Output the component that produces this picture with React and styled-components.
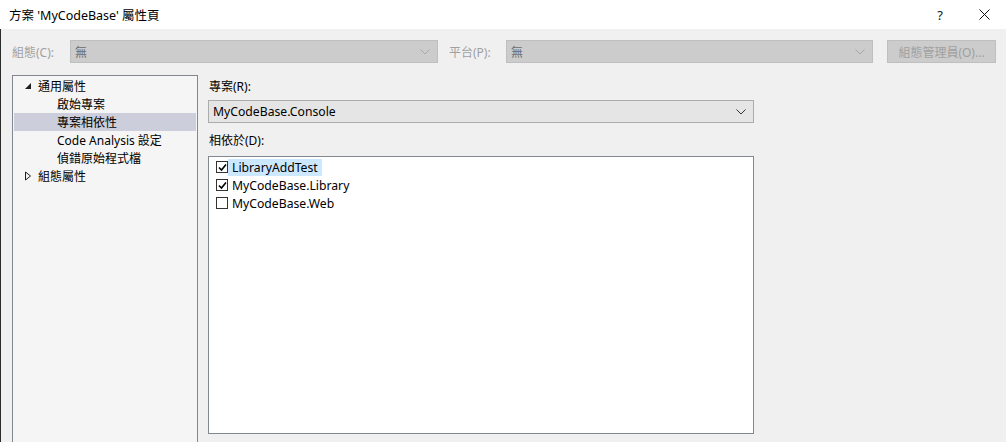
import styled, {createGlobalStyle} from 'styled-components';

const GlobalStyle = createGlobalStyle`
  html, body {
    margin: 0;
    padding: 0;
    background: #f0f0f0;
  }
  body {
    font-family: "Noto Sans", "Noto Sans CJK TC", sans-serif;
    font-size: 12px;
    color: #000;
  }
`;

const treeItems = [
  {label: '通用屬性', level: 0, toggle: 'open'},
  {label: '啟始專案', level: 1},
  {label: '專案相依性', level: 1, selected: true},
  {label: 'Code Analysis 設定', level: 1},
  {label: '偵錯原始程式檔', level: 1},
  {label: '組態屬性', level: 0, toggle: 'closed'},
];

const dependencies = [
  {name: 'LibraryAddTest', checked: true, focused: true},
  {name: 'MyCodeBase.Library', checked: true},
  {name: 'MyCodeBase.Web', checked: false},
];

const Chevron = ({color}) => (
  <svg width="10" height="6" viewBox="0 0 10 6">
    <path d="M0.5 0.5 L5 5 L9.5 0.5" fill="none" stroke={color} strokeWidth="1" />
  </svg>
);

const CheckMark = () => (
  <svg width="9" height="9" viewBox="0 0 9 9">
    <path d="M1 4.5 L3.5 7 L8 1.5" fill="none" stroke="#000" strokeWidth="1.6" />
  </svg>
);

const ToggleIcon = ({state}) =>
  state === 'open' ? (
    <svg width="8" height="8" viewBox="0 0 8 8">
      <path d="M7 1 L7 7 L1 7 Z" fill="#1e1e1e" />
    </svg>
  ) : (
    <svg width="8" height="10" viewBox="0 0 8 10">
      <path d="M1.5 1 L6.5 5 L1.5 9 Z" fill="none" stroke="#1e1e1e" strokeWidth="1" />
    </svg>
  );

export default function App() {
  return (
    <>
      <GlobalStyle />
      <Window>
        <TitleBar>
          <Title>方案 'MyCodeBase' 屬性頁</Title>
          <TitleButtons>
            <HelpButton>?</HelpButton>
            <CloseButton>
              <svg width="11" height="11" viewBox="0 0 11 11">
                <path d="M0.5 0.5 L10.5 10.5 M10.5 0.5 L0.5 10.5" stroke="#111" strokeWidth="1" />
              </svg>
            </CloseButton>
          </TitleButtons>
        </TitleBar>

        <Body>
          <Toolbar>
            <ToolLabel width={58}>組態(C):</ToolLabel>
            <Combo width={368} disabled>
              <span>無</span>
              <Chevron color="#a8a8a8" />
            </Combo>
            <ToolLabel width={57} style={{marginLeft: 11}}>平台(P):</ToolLabel>
            <Combo width={367} disabled>
              <span>無</span>
              <Chevron color="#a8a8a8" />
            </Combo>
            <ManagerButton>組態管理員(O)...</ManagerButton>
          </Toolbar>

          <Content>
            <Tree>
              {treeItems.map(item => (
                <TreeRow key={item.label} selected={item.selected} level={item.level}>
                  <TreeToggle>{item.toggle && <ToggleIcon state={item.toggle} />}</TreeToggle>
                  {item.label}
                </TreeRow>
              ))}
            </Tree>

            <Pane>
              <FieldLabel>專案(R):</FieldLabel>
              <Combo width={546}>
                <ComboText>MyCodeBase.Console</ComboText>
                <Chevron color="#333" />
              </Combo>
              <FieldLabel style={{marginTop: 10}}>相依於(D):</FieldLabel>
              <DependencyList>
                {dependencies.map(dep => (
                  <DependencyRow key={dep.name}>
                    <CheckBox>{dep.checked && <CheckMark />}</CheckBox>
                    <DependencyName focused={dep.focused}>{dep.name}</DependencyName>
                  </DependencyRow>
                ))}
              </DependencyList>
            </Pane>
          </Content>
        </Body>
      </Window>
    </>
  );
}

const Window = styled.div`
  width: 1006px;
  height: 442px;
  display: flex;
  flex-direction: column;
  overflow: hidden;
`;

const TitleBar = styled.div`
  height: 29px;
  flex: none;
  background: #fff;
  display: flex;
  align-items: center;
  justify-content: space-between;
  padding-left: 9px;
`;

const Title = styled.div`
  font-size: 12.5px;
  color: #000;
  padding-bottom: 1px;
`;

const TitleButtons = styled.div`
  display: flex;
  align-items: center;
  height: 100%;
`;

const HelpButton = styled.div`
  width: 48px;
  text-align: center;
  font-size: 13px;
  color: #111;
`;

const CloseButton = styled.div`
  width: 40px;
  display: flex;
  justify-content: center;
  align-items: center;
  margin-right: 2px;
`;

const Body = styled.div`
  flex: 1;
  background: #f0f0f0;
  border-left: 1px solid #2b2b2b;
  padding: 11px 10px 0 11px;
  display: flex;
  flex-direction: column;
  min-height: 0;
`;

const Toolbar = styled.div`
  display: flex;
  align-items: center;
  height: 23px;
`;

const ToolLabel = styled.div`
  width: ${p => p.width}px;
  color: #a0a0a0;
`;

const Combo = styled.div`
  box-sizing: border-box;
  width: ${p => p.width}px;
  height: 23px;
  flex: none;
  display: flex;
  align-items: center;
  justify-content: space-between;
  padding: 0 7px 0 4px;
  background: ${p => (p.disabled ? '#cccccc' : '#e5e5e5')};
  border: 1px solid ${p => (p.disabled ? '#bfbfbf' : '#acacac')};
  color: ${p => (p.disabled ? '#6d6d6d' : '#000')};
`;

const ComboText = styled.span`
  font-size: 12.2px;
`;

const ManagerButton = styled.div`
  box-sizing: border-box;
  margin-left: 14px;
  width: 109px;
  height: 23px;
  display: flex;
  align-items: center;
  justify-content: center;
  background: #cccccc;
  border: 1px solid #bfbfbf;
  color: #a0a0a0;
`;

const Content = styled.div`
  flex: 1;
  display: flex;
  margin-top: 12px;
  min-height: 0;
`;

const Tree = styled.div`
  box-sizing: border-box;
  width: 186px;
  height: 380px;
  flex: none;
  background: #f5f5f5;
  border: 1px solid #828790;
  padding: 1px 1px 0;
`;

const TreeRow = styled.div`
  height: 18px;
  display: flex;
  align-items: center;
  padding-left: ${p => 7 + p.level * 19}px;
  background: ${p => (p.selected ? '#cccedb' : 'transparent')};
  font-size: 12px;
  white-space: nowrap;
`;

const TreeToggle = styled.span`
  width: 17px;
  display: flex;
  align-items: center;
  justify-content: flex-start;
  padding-left: 3px;
  box-sizing: border-box;
`;

const Pane = styled.div`
  margin-left: 10px;
  width: 546px;
  padding-top: 4px;
  display: flex;
  flex-direction: column;
`;

const FieldLabel = styled.div`
  height: 16px;
  line-height: 16px;
  padding-left: 1px;
  margin-bottom: 5px;
  font-size: 12px;
`;

const DependencyList = styled.div`
  box-sizing: border-box;
  margin-top: 2px;
  height: 278px;
  background: #fff;
  border: 1px solid #828790;
  padding: 1px 0 0 7px;
`;

const DependencyRow = styled.div`
  height: 18px;
  display: flex;
  align-items: center;
`;

const CheckBox = styled.span`
  box-sizing: border-box;
  width: 12px;
  height: 12px;
  border: 1px solid #333;
  background: #fff;
  display: flex;
  align-items: center;
  justify-content: center;
`;

const DependencyName = styled.span`
  margin-left: 0;
  padding: 0 4px;
  height: 17px;
  line-height: 17px;
  font-size: 12.2px;
  background: ${p => (p.focused ? '#cce8ff' : 'transparent')};
`;
